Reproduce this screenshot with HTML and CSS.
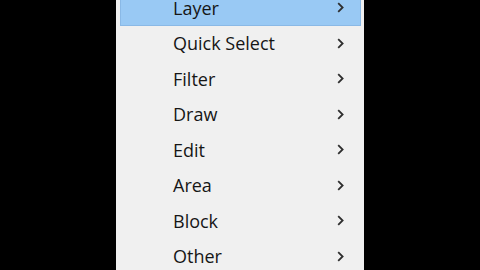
FILE: index.html
```html
<!DOCTYPE html>
<html>
<head>
<meta charset="utf-8">
<link rel="stylesheet" href="styles.css">
</head>
<body>
<div class="menu">
  <div class="item active"><span class="label">Layer</span><svg class="chev" viewBox="0 0 7 11"><path d="M1.2 1.2 L5.6 5.5 L1.2 9.8"/></svg></div>
  <div class="item"><span class="label">Quick Select</span><svg class="chev" viewBox="0 0 7 11"><path d="M1.2 1.2 L5.6 5.5 L1.2 9.8"/></svg></div>
  <div class="item"><span class="label">Filter</span><svg class="chev" viewBox="0 0 7 11"><path d="M1.2 1.2 L5.6 5.5 L1.2 9.8"/></svg></div>
  <div class="item"><span class="label">Draw</span><svg class="chev" viewBox="0 0 7 11"><path d="M1.2 1.2 L5.6 5.5 L1.2 9.8"/></svg></div>
  <div class="item"><span class="label">Edit</span><svg class="chev" viewBox="0 0 7 11"><path d="M1.2 1.2 L5.6 5.5 L1.2 9.8"/></svg></div>
  <div class="item"><span class="label">Area</span><svg class="chev" viewBox="0 0 7 11"><path d="M1.2 1.2 L5.6 5.5 L1.2 9.8"/></svg></div>
  <div class="item"><span class="label">Block</span><svg class="chev" viewBox="0 0 7 11"><path d="M1.2 1.2 L5.6 5.5 L1.2 9.8"/></svg></div>
  <div class="item"><span class="label">Other</span><svg class="chev" viewBox="0 0 7 11"><path d="M1.2 1.2 L5.6 5.5 L1.2 9.8"/></svg></div>
</div>
</body>
</html>
```
FILE: styles.css
```css
html, body {
  margin: 0;
  padding: 0;
  background: #000;
  width: 480px;
  height: 270px;
  overflow: hidden;
}
.menu {
  margin-left: 116px;
  width: 248px;
  margin-top: -10px;
  height: 290px;
  background: #f0f0f0;
  box-sizing: border-box;
  padding: 0 3px 0 4px;
  display: flex;
  flex-direction: column;
  font-family: "Open Sans", "Noto Sans", sans-serif;
  font-size: 18px;
  font-weight: 500;
  color: #161616;
}
.item {
  height: 35.5px;
  flex: none;
  display: flex;
  align-items: center;
  padding-left: 53px;
  padding-right: 17px;
  box-sizing: border-box;
}
.item.active {
  background: #99c9f4;
  border: 1px solid #8ab9e6;
  padding-left: 52px;
  padding-right: 16px;
}
.label {
  flex: 1;
  line-height: 1;
  margin-top: 0;
}
.chev {
  width: 7px;
  height: 11px;
  fill: none;
  stroke: #2e2e2e;
  stroke-width: 1.8;
}
```
